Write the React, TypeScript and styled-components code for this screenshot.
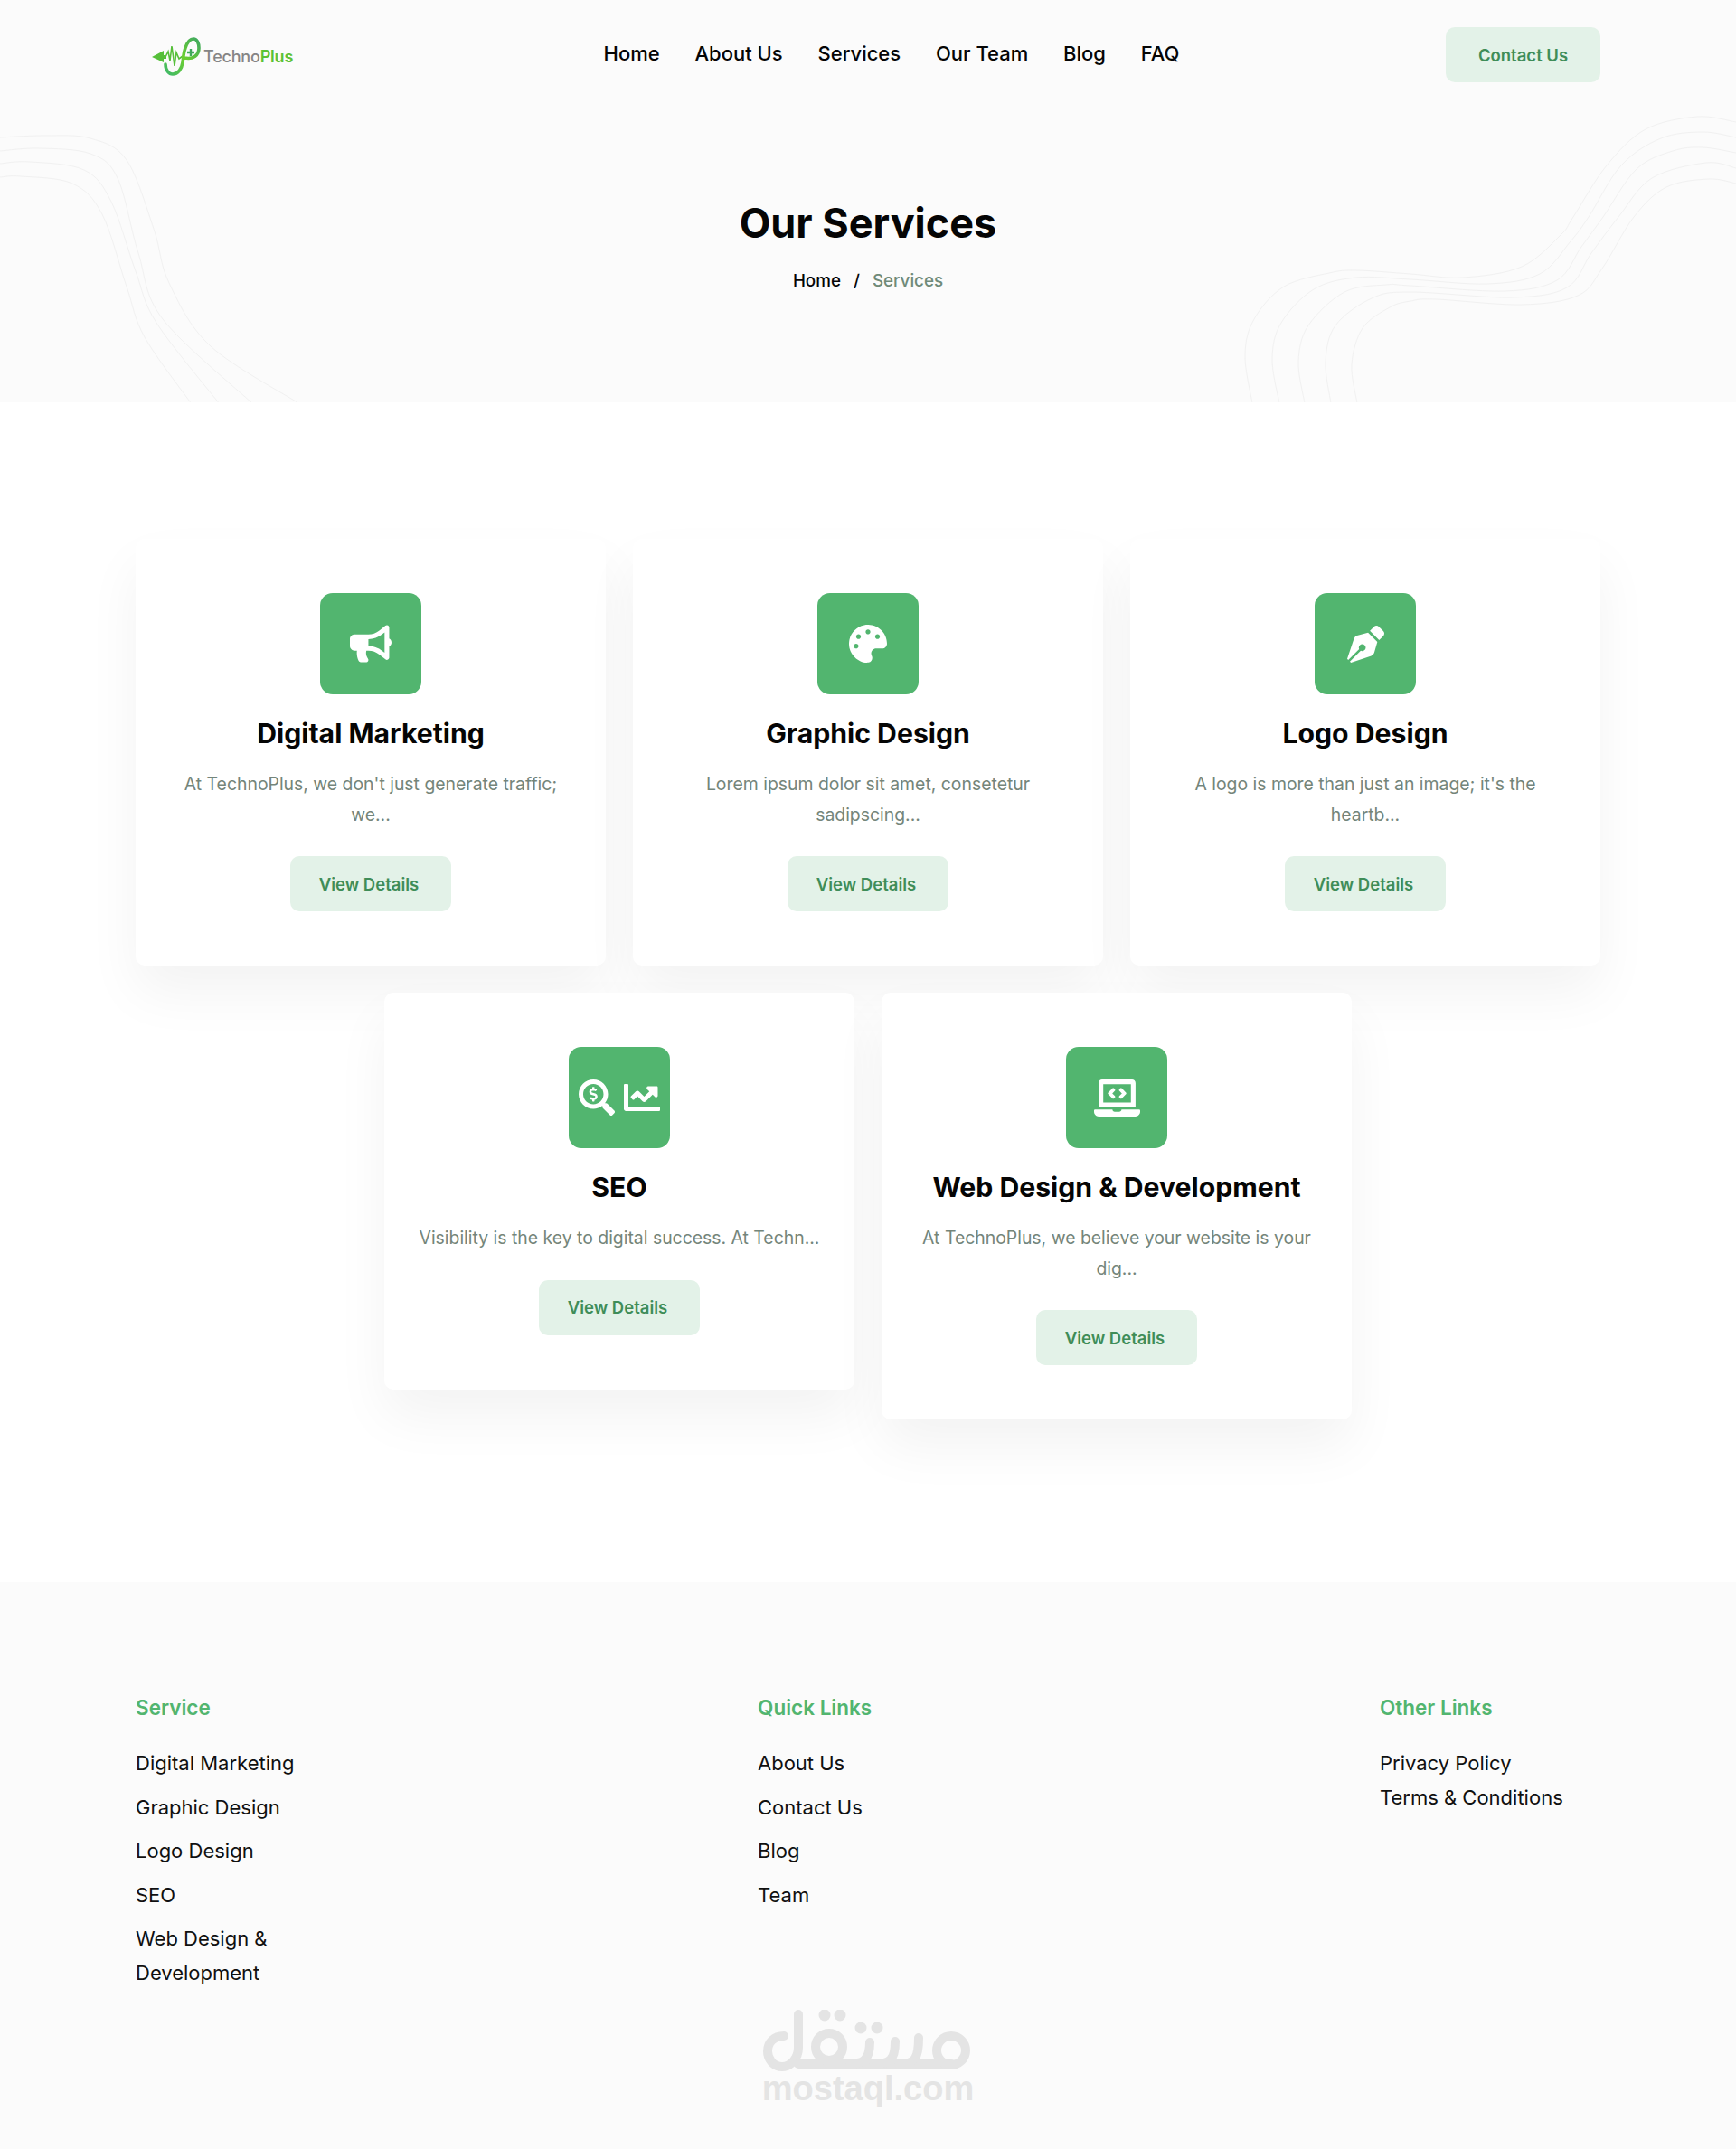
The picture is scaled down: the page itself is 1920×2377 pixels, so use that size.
import styled, { createGlobalStyle } from 'styled-components';
import { FaBullhorn, FaPalette, FaPenNib, FaSearchDollar, FaChartLine, FaLaptopCode } from 'react-icons/fa';
import type { ReactNode } from 'react';

const GREEN = '#52b56f';
const FONT = `Inter, 'Noto Sans', 'Liberation Sans', sans-serif`;

const NAV_LINKS = ['Home', 'About Us', 'Services', 'Our Team', 'Blog', 'FAQ'];

const SERVICES: { title: string; text: string; iconSize: number; icon: ReactNode }[] = [
	{
		title: 'Digital Marketing',
		text: "At TechnoPlus, we don't just generate traffic; we...",
		iconSize: 46,
		icon: <FaBullhorn />,
	},
	{
		title: 'Graphic Design',
		text: 'Lorem ipsum dolor sit amet, consetetur sadipscing...',
		iconSize: 42,
		icon: <FaPalette />,
	},
	{
		title: 'Logo Design',
		text: "A logo is more than just an image; it's the heartb...",
		iconSize: 41,
		icon: <FaPenNib />,
	},
	{
		title: 'SEO',
		text: 'Visibility is the key to digital success. At Techn...',
		iconSize: 40,
		icon: (
			<>
				<FaSearchDollar />
				<FaChartLine />
			</>
		),
	},
	{
		title: 'Web Design & Development',
		text: 'At TechnoPlus, we believe your website is your dig...',
		iconSize: 51,
		icon: <FaLaptopCode />,
	},
];

// hand-traced from the hero background
const CURVES = [
	[[0, 152], [50, 150], [100, 153], [140, 177], [170, 253], [187, 313], [233, 383], [332, 447]],
	[[0, 167], [43, 164], [100, 170], [130, 197], [153, 280], [180, 353], [280, 447]],
	[[0, 181], [33, 179], [93, 188], [123, 223], [150, 300], [173, 357], [243, 447]],
	[[0, 196], [23, 195], [80, 203], [113, 237], [140, 317], [160, 373], [212, 447]],
	[[1385, 446], [1377, 393], [1387, 353], [1420, 317], [1470, 302], [1500, 299], [1560, 303], [1618, 307], [1683, 295], [1726, 260], [1740, 240], [1777, 183], [1820, 143], [1877, 129], [1920, 135]],
	[[1415, 446], [1407, 397], [1417, 357], [1453, 320], [1500, 307], [1560, 309], [1645, 314], [1703, 303], [1737, 267], [1757, 240], [1793, 183], [1837, 153], [1883, 146], [1920, 152]],
	[[1443, 446], [1436, 400], [1447, 360], [1487, 323], [1533, 315], [1560, 316], [1664, 322], [1722, 310], [1749, 273], [1773, 240], [1810, 187], [1850, 167], [1883, 163], [1920, 169]],
	[[1472, 446], [1466, 400], [1477, 360], [1517, 330], [1560, 323], [1672, 329], [1733, 318], [1760, 280], [1790, 240], [1827, 197], [1887, 180], [1920, 186]],
	[[1501, 446], [1495, 403], [1507, 363], [1537, 340], [1560, 333], [1588, 331], [1683, 337], [1745, 327], [1772, 297], [1807, 240], [1843, 207], [1890, 198], [1920, 203]],
];

// rounds a list of points into a smooth line
const smoothPath = (points: number[][]) => {
	let d = `M${points[0][0]} ${points[0][1]}`;
	for (let i = 0; i < points.length - 1; i++) {
		const p0 = points[i - 1] || points[i];
		const p1 = points[i];
		const p2 = points[i + 1];
		const p3 = points[i + 2] || p2;
		d += ` C${p1[0] + (p2[0] - p0[0]) / 6} ${p1[1] + (p2[1] - p0[1]) / 6} ${p2[0] - (p3[0] - p1[0]) / 6} ${p2[1] - (p3[1] - p1[1]) / 6} ${p2[0]} ${p2[1]}`;
	}
	return d;
};

const GlobalStyle = createGlobalStyle`
	* {
		box-sizing: border-box;
	}
	body {
		margin: 0;
		background: #fff;
		font-family: ${FONT};
	}
`;

const Hero = styled.header`
	position: relative;
	height: 445px;
	background: #fbfbfb;
	overflow: hidden;
`;

const Curves = styled.svg`
	position: absolute;
	top: 0;
	left: 0;
	width: 1920px;
	height: 445px;
	fill: none;
	stroke: #f1f1f1;
	stroke-width: 1;
`;

const Nav = styled.nav`
	position: relative;
	display: grid;
	grid-template-columns: 1fr auto 1fr;
	align-items: center;
	padding: 30px 150px 0;
`;

const Logo = styled.div`
	display: flex;
	align-items: center;
	gap: 3px;
	padding: 4px 0 0 18px;
	font-size: 18px;
	font-weight: 500;
	letter-spacing: -0.2px;
	color: #858585;
`;

const LogoPlus = styled.span`
	color: #5bc236;
	font-weight: 600;
`;

const NavList = styled.ul`
	display: flex;
	gap: 38.800px;
	margin: 0 0 4px;
	padding: 0 0 0 52px;
	list-style: none;
`;

const NavItem = styled.li`
	font-size: 22px;
	font-weight: 500;
	color: #050505;
`;

const Button = styled.a`
	display: inline-flex;
	align-items: center;
	justify-content: center;
	width: 178px;
	height: 61px;
	padding-right: 4px;
	border-radius: 10px;
	background: #e3f2e8;
	color: #3f8d58;
	font-size: 18.500px;
	font-weight: 600;
`;

const ContactButton = styled(Button)`
	justify-self: end;
	width: 171px;
	padding-right: 0;
`;

const HeroTitle = styled.h1`
	position: relative;
	margin: 128px 0 0;
	text-align: center;
	font-size: 45px;
	line-height: 56px;
	font-weight: 700;
	color: #050505;
`;

const Breadcrumb = styled.div`
	position: relative;
	display: flex;
	justify-content: center;
	gap: 14px;
	margin-top: 24px;
	font-size: 18.800px;
	line-height: 24px;
	font-weight: 500;
`;

const Crumb = styled.span<{ $active?: boolean }>`
	color: ${(p) => (p.$active ? '#6f8a78' : '#050505')};
`;

const Main = styled.main`
	display: flex;
	flex-wrap: wrap;
	justify-content: center;
	align-items: flex-start;
	gap: 30px;
	padding: 151px 150px 180px;
`;

const Card = styled.article`
	display: flex;
	flex-direction: column;
	align-items: center;
	width: 520px;
	padding: 60px 35px;
	border-radius: 10px;
	background: #fff;
	box-shadow: 0 30px 60px rgba(0, 0, 0, 0.05);
`;

const IconBox = styled.div<{ $size: number }>`
	display: flex;
	align-items: center;
	justify-content: center;
	gap: 10px;
	width: 112px;
	height: 112px;
	border-radius: 14px;
	background: ${GREEN};
	color: #fff;
	font-size: ${(p) => p.$size}px;
`;

const CardTitle = styled.h2`
	margin: 25px 0 0;
	font-size: 30.200px;
	line-height: 36px;
	font-weight: 700;
	color: #050505;
	white-space: nowrap;
`;

const CardText = styled.p`
	margin: 22px 0 29px;
	text-align: center;
	font-size: 19.400px;
	line-height: 33.6px;
	color: #74857a;
`;

const Footer = styled.footer`
	height: 627px;
	padding: 121px 150px 0;
	background: #fbfbfb;
`;

const FooterColumns = styled.div`
	display: flex;
	justify-content: space-between;
`;

const FooterColumn = styled.div<{ $wide?: boolean }>`
	width: ${(p) => (p.$wide ? '244px' : '200px')};
`;

const FooterTitle = styled.h3`
	margin: 0 0 24px;
	font-size: 22.500px;
	line-height: 36px;
	font-weight: 600;
	color: ${GREEN};
`;

const FooterList = styled.ul<{ $tight?: boolean }>`
	display: flex;
	flex-direction: column;
	gap: ${(p) => (p.$tight ? '0' : '10.500px')};
	margin: 0;
	padding: 0;
	list-style: none;
`;

const FooterLink = styled.li`
	font-size: 22px;
	line-height: 38px;
	color: #101010;
`;

const Watermark = styled.div`
	display: flex;
	flex-direction: column;
	align-items: center;
	margin-top: 22px;
	color: #e4e4e4;
`;

const WatermarkText = styled.div`
	margin-top: -2px;
	font-family: 'Liberation Sans', sans-serif;
	font-size: 38px;
	line-height: 42px;
	font-weight: 700;
`;

const TechnoMark = () => (
	<svg width="54" height="43" viewBox="0 0 54 43" fill="none">
		<defs>
			<linearGradient id="mark" x1="0" y1="1" x2="1" y2="0">
				<stop offset="0" stopColor="#3fb86a" />
				<stop offset="0.5" stopColor="#6ccf2f" />
				<stop offset="1" stopColor="#3fa860" />
			</linearGradient>
		</defs>
		<path d="M0 22 L13 15 V20 H16 V24 H13 V28 Z" fill="#56bf3a" />
		<path d="M15 22 L18 16 L20 26 L22 10 L25 32 L27 17 L30 24 L34 21" stroke="#56bf3a" strokeWidth="1.600" />
		<path
			d="M15 30 C15 37 19 41 23 41 C29 41 33 35 34 28 C35 21 35 17 37 12 C39 6 42 2 46 2 C50 2 52 7 52 12 C52 20 46 25 36 23"
			stroke="url(#mark)"
			strokeWidth="3.600"
			strokeLinecap="round"
		/>
		<path d="M39 17 H47 M43 13 V21" stroke="#3fa85a" strokeWidth="2.400" />
	</svg>
);

const MostaqlMark = () => (
	<svg width="232" height="68" viewBox="0 0 232 68" fill="none" stroke="#e4e4e4" strokeWidth="10" strokeLinecap="round">
		<path d="M39 5 V42 C39 54 30 63 21 63 C11 63 5 54 5 46 C5 36 12 29 23 29" />
		<path d="M39 60 H208" />
		<circle cx="73" cy="41" r="15" />
		<path d="M96 60 C110 60 118 56 118 36 M122 60 C140 60 146 56 146 35 M150 60 C168 60 172 54 172 31" />
		<circle cx="208" cy="45" r="16" />
		<g fill="#e4e4e4" stroke="none">
			<circle cx="68" cy="6" r="6.500" />
			<circle cx="85" cy="6" r="6.500" />
			<circle cx="108" cy="20" r="6.500" />
			<circle cx="126" cy="20" r="6.500" />
		</g>
	</svg>
);

const App = () => {
	return (
		<>
			<GlobalStyle />
			<Hero>
				<Curves viewBox="0 0 1920 445">
					{CURVES.map((points, i) => (
						<path key={i} d={smoothPath(points)} />
					))}
				</Curves>
				<Nav>
					<Logo>
						<TechnoMark />
						<span>
							Techno<LogoPlus>Plus</LogoPlus>
						</span>
					</Logo>
					<NavList>
						{NAV_LINKS.map((link) => (
							<NavItem key={link}>{link}</NavItem>
						))}
					</NavList>
					<ContactButton>Contact Us</ContactButton>
				</Nav>
				<HeroTitle>Our Services</HeroTitle>
				<Breadcrumb>
					<Crumb>Home</Crumb>
					<Crumb>/</Crumb>
					<Crumb $active>Services</Crumb>
				</Breadcrumb>
			</Hero>
			<Main>
				{SERVICES.map((service) => (
					<Card key={service.title}>
						<IconBox $size={service.iconSize}>{service.icon}</IconBox>
						<CardTitle>{service.title}</CardTitle>
						<CardText>{service.text}</CardText>
						<Button>View Details</Button>
					</Card>
				))}
			</Main>
			<Footer>
				<FooterColumns>
					<FooterColumn>
						<FooterTitle>Service</FooterTitle>
						<FooterList>
							<FooterLink>Digital Marketing</FooterLink>
							<FooterLink>Graphic Design</FooterLink>
							<FooterLink>Logo Design</FooterLink>
							<FooterLink>SEO</FooterLink>
							<FooterLink>Web Design & Development</FooterLink>
						</FooterList>
					</FooterColumn>
					<FooterColumn>
						<FooterTitle>Quick Links</FooterTitle>
						<FooterList>
							<FooterLink>About Us</FooterLink>
							<FooterLink>Contact Us</FooterLink>
							<FooterLink>Blog</FooterLink>
							<FooterLink>Team</FooterLink>
						</FooterList>
					</FooterColumn>
					<FooterColumn $wide>
						<FooterTitle>Other Links</FooterTitle>
						<FooterList $tight>
							<FooterLink>Privacy Policy</FooterLink>
							<FooterLink>Terms & Conditions</FooterLink>
						</FooterList>
					</FooterColumn>
				</FooterColumns>
				<Watermark>
					<MostaqlMark />
					<WatermarkText>mostaql.com</WatermarkText>
				</Watermark>
			</Footer>
		</>
	);
};

export default App;
